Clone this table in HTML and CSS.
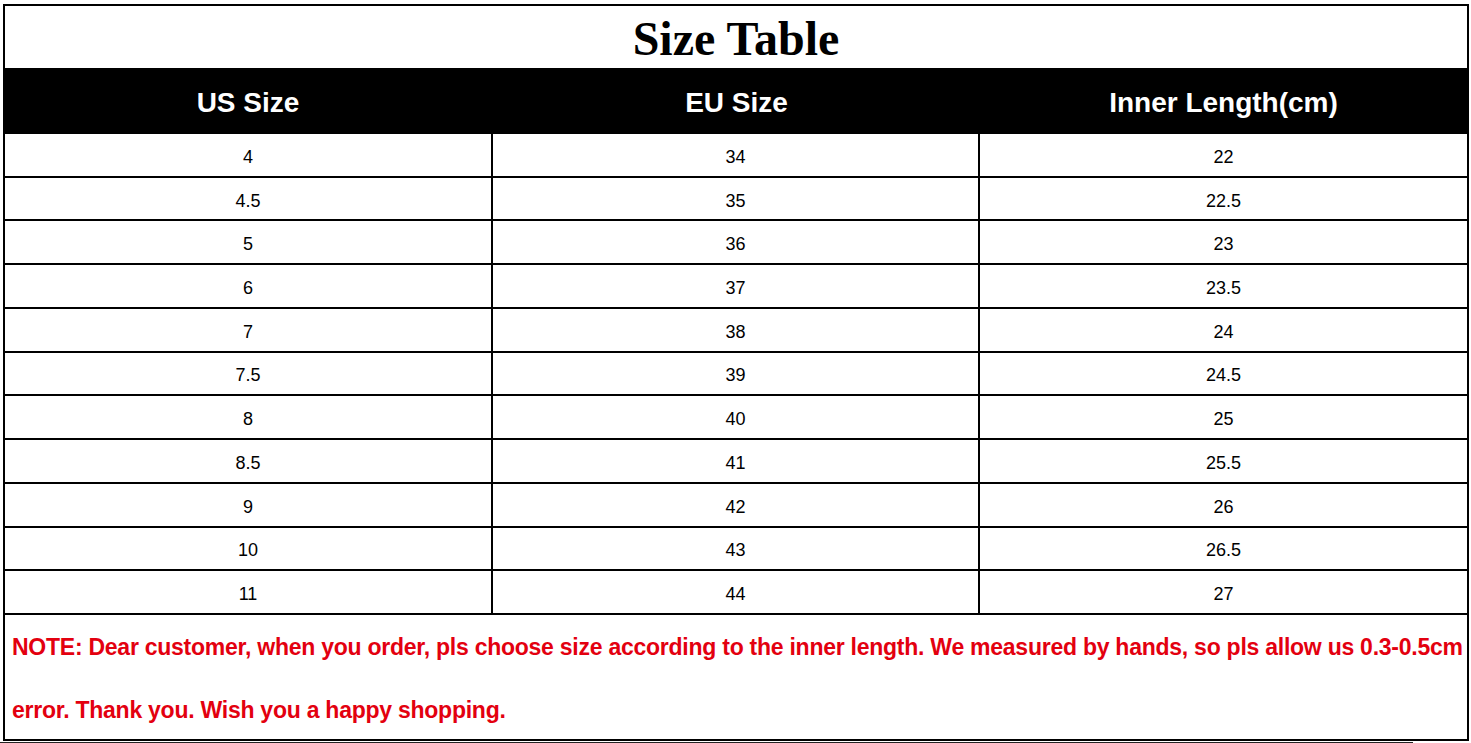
FILE: index.html
```html
<!DOCTYPE html>
<html>
<head>
<meta charset="utf-8">
<title>Size Table</title>
<link rel="stylesheet" href="styles.css">
</head>
<body>
<div class="sheet">
  <div class="title">Size Table</div>
  <div class="head">
    <div class="hcell">US Size</div>
    <div class="hcell">EU Size</div>
    <div class="hcell">Inner Length(cm)</div>
  </div>
  <div class="rows">
    <div class="cell">4</div><div class="cell">34</div><div class="cell">22</div>
    <div class="cell">4.5</div><div class="cell">35</div><div class="cell">22.5</div>
    <div class="cell">5</div><div class="cell">36</div><div class="cell">23</div>
    <div class="cell">6</div><div class="cell">37</div><div class="cell">23.5</div>
    <div class="cell">7</div><div class="cell">38</div><div class="cell">24</div>
    <div class="cell">7.5</div><div class="cell">39</div><div class="cell">24.5</div>
    <div class="cell">8</div><div class="cell">40</div><div class="cell">25</div>
    <div class="cell">8.5</div><div class="cell">41</div><div class="cell">25.5</div>
    <div class="cell">9</div><div class="cell">42</div><div class="cell">26</div>
    <div class="cell">10</div><div class="cell">43</div><div class="cell">26.5</div>
    <div class="cell">11</div><div class="cell">44</div><div class="cell">27</div>
  </div>
  <div class="note">NOTE: Dear customer, when you order, pls choose size according to the inner length. We measured by hands, so pls allow us 0.3-0.5cm<br>error. Thank you. Wish you a happy shopping.</div>
</div>
<div class="underline"></div>
</body>
</html>
```
FILE: styles.css
```css
html, body {
  margin: 0;
  padding: 0;
  background: #fff;
}
body {
  overflow: hidden;
  height: 743px;
}
.sheet {
  box-sizing: border-box;
  width: 1466px;
  height: 737px;
  margin: 4px 0 0 3px;
  border: 2px solid #000;
  display: flex;
  flex-direction: column;
}
.title {
  flex-shrink: 0;
  height: 62px;
  display: flex;
  align-items: center;
  justify-content: center;
  font-family: "Liberation Serif", "Times New Roman", serif;
  font-weight: bold;
  font-size: 48px;
  color: #000;
  padding-top: 3px;
  box-sizing: border-box;
}
.head {
  flex-shrink: 0;
  height: 66px;
  box-sizing: border-box;
  padding-top: 4px;
  background: #000;
  display: grid;
  grid-template-columns: 488px 487px 1fr;
}
.hcell {
  display: flex;
  align-items: center;
  justify-content: center;
  color: #fff;
  font-family: "Liberation Sans", Arial, sans-serif;
  font-weight: bold;
  font-size: 28px;
}
.hcell:first-child {
  padding-right: 2px;
}
.rows {
  flex-shrink: 0;
  height: 481px;
  display: grid;
  grid-template-columns: 488px 487px 1fr;
  grid-template-rows: repeat(11, 1fr);
}
.cell {
  border-bottom: 2px solid #000;
  border-right: 2px solid #000;
  display: flex;
  align-items: center;
  justify-content: center;
  font-family: "Liberation Sans", Arial, sans-serif;
  font-size: 18px;
  color: #000;
  padding-top: 5px;
}
.cell:nth-child(3n) {
  border-right: none;
}
.note {
  flex: 1 1 0;
  min-height: 0;
  padding: 1px 0 0 7px;
  font-family: "Liberation Sans", Arial, sans-serif;
  font-weight: bold;
  font-size: 23px;
  line-height: 63px;
  color: #e3000f;
  white-space: nowrap;
  letter-spacing: -0.25px;
}
.underline {
  width: 1413px;
  height: 1px;
  margin-top: 1px;
  background: #222;
}
```
